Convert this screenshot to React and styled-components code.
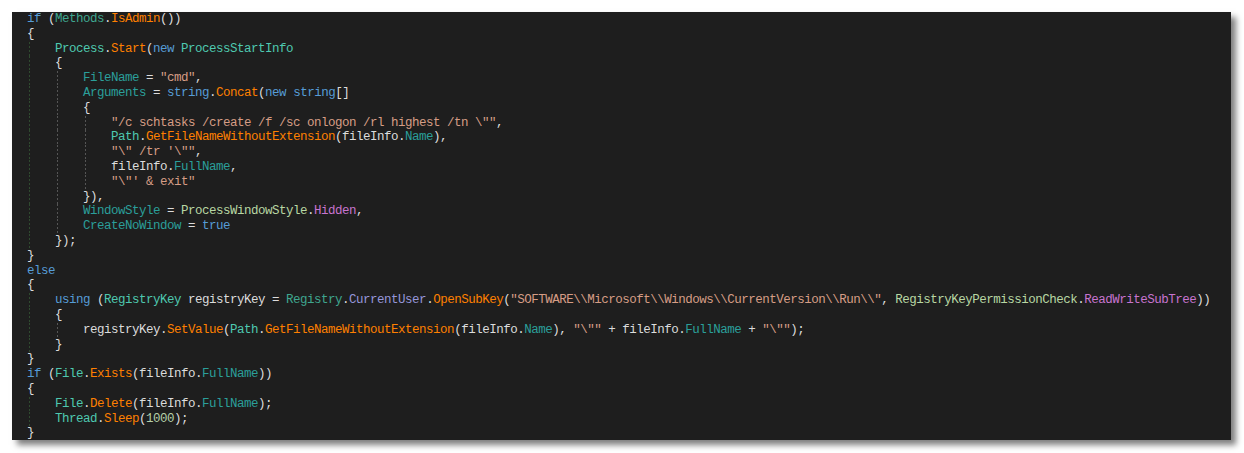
import styled, { createGlobalStyle } from "styled-components";

const GlobalStyle = createGlobalStyle`
  html, body {
    margin: 0;
    padding: 0;
    background: #ffffff;
  }
`;

const Page = styled.div`
  padding: 12px;
  width: 1244px;
  height: 453px;
  box-sizing: border-box;
`;

const Editor = styled.pre`
  margin: 0;
  width: 1219px;
  height: 428px;
  box-sizing: border-box;
  padding: 0 0 0 15px;
  background: #1e1e1e;
  box-shadow: 5px 5px 6px rgba(0, 0, 0, 0.5);
  font-family: "Liberation Mono", "DejaVu Sans Mono", monospace;
  font-size: 12.5px;
  letter-spacing: -0.5px;
  color: #dcdcdc;
  overflow: hidden;
`;

const Line = styled.div`
  display: flex;
  height: 14.8px;
  line-height: 14.8px;
  white-space: pre;
`;

// one indent level (4 chars) with its dashed guide
const Guide = styled.span`
  display: inline-block;
  flex: none;
  width: 28px;
  height: 100%;
  background-image: repeating-linear-gradient(
    to bottom,
    ${(p) => (p.$outer ? "#2f4a2f" : "#555555")} 0 2px,
    transparent 2px 4px
  );
  background-size: 1px 100%;
  background-position: 2px 0;
  background-repeat: no-repeat;
`;

const colors = {
  p: "#dcdcdc",
  kw: "#569cd6",
  type: "#4ec9b0",
  cls: "#3fa68f",
  fn: "#ff8000",
  prop: "#2b9f9a",
  str: "#d69d85",
  enumT: "#b8d7a3",
  enumM: "#c774cf",
  stat: "#9696da",
  num: "#b5cea8",
};

const Tok = styled.span`
  color: ${(p) => colors[p.$k] || colors.p};
`;

const code = [
  [0, ["kw", "if"], " (", ["cls", "Methods"], ".", ["fn", "IsAdmin"], "())"],
  [0, "{"],
  [4, ["type", "Process"], ".", ["fn", "Start"], "(", ["kw", "new"], " ", ["type", "ProcessStartInfo"]],
  [4, "{"],
  [8, ["prop", "FileName"], " = ", ["str", '"cmd"'], ","],
  [8, ["prop", "Arguments"], " = ", ["kw", "string"], ".", ["fn", "Concat"], "(", ["kw", "new"], " ", ["kw", "string"], "[]"],
  [8, "{"],
  [12, ["str", '"/c schtasks /create /f /sc onlogon /rl highest /tn \\""'], ","],
  [12, ["type", "Path"], ".", ["fn", "GetFileNameWithoutExtension"], "(fileInfo.", ["prop", "Name"], "),"],
  [12, ["str", '"\\" /tr \'\\""'], ","],
  [12, "fileInfo.", ["prop", "FullName"], ","],
  [12, ["str", '"\\"\' & exit"']],
  [8, "}),"],
  [8, ["prop", "WindowStyle"], " = ", ["enumT", "ProcessWindowStyle"], ".", ["enumM", "Hidden"], ","],
  [8, ["prop", "CreateNoWindow"], " = ", ["kw", "true"]],
  [4, "});"],
  [0, "}"],
  [0, ["kw", "else"]],
  [0, "{"],
  [4, ["kw", "using"], " (", ["type", "RegistryKey"], " registryKey = ", ["cls", "Registry"], ".", ["stat", "CurrentUser"], ".", ["fn", "OpenSubKey"], "(", ["str", '"SOFTWARE\\\\Microsoft\\\\Windows\\\\CurrentVersion\\\\Run\\\\"'], ", ", ["enumT", "RegistryKeyPermissionCheck"], ".", ["enumM", "ReadWriteSubTree"], "))"],
  [4, "{"],
  [8, "registryKey.", ["fn", "SetValue"], "(", ["type", "Path"], ".", ["fn", "GetFileNameWithoutExtension"], "(fileInfo.", ["prop", "Name"], "), ", ["str", '"\\""'], " + fileInfo.", ["prop", "FullName"], " + ", ["str", '"\\""'], ");"],
  [4, "}"],
  [0, "}"],
  [0, ["kw", "if"], " (", ["type", "File"], ".", ["fn", "Exists"], "(fileInfo.", ["prop", "FullName"], "))"],
  [0, "{"],
  [4, ["type", "File"], ".", ["fn", "Delete"], "(fileInfo.", ["prop", "FullName"], ");"],
  [4, ["type", "Thread"], ".", ["fn", "Sleep"], "(", ["num", "1000"], ");"],
  [0, "}"],
];

export default function App() {
  return (
    <>
      <GlobalStyle />
      <Page>
        <Editor>
          {code.map(([indent, ...parts], i) => (
            <Line key={i}>
              {Array.from({ length: indent / 4 }).map((_, g) => (
                <Guide key={g} $outer={g === 0} />
              ))}
              <span>
                {parts.map((t, j) =>
                  typeof t === "string" ? (
                    <Tok key={j}>{t}</Tok>
                  ) : (
                    <Tok key={j} $k={t[0]}>
                      {t[1]}
                    </Tok>
                  )
                )}
              </span>
            </Line>
          ))}
        </Editor>
      </Page>
    </>
  );
}
